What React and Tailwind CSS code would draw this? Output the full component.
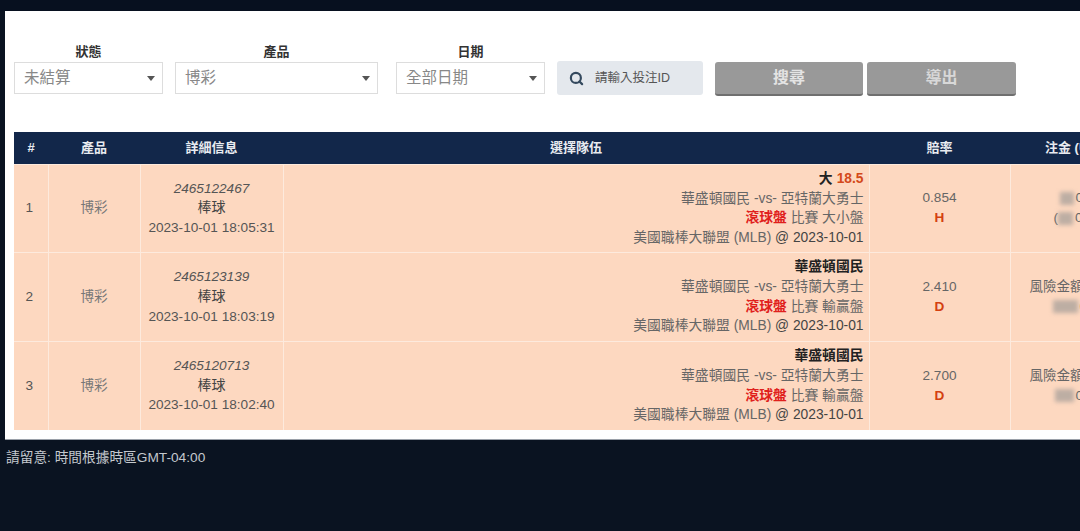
import React from 'react';
import { Search } from 'lucide-react';

const rows = [
  {
    no: 1, id: '2465122467', time: '2023-10-01 18:05:31', pick: '大', line: '18.5', market: '大小盤', odds: '0.854', code: 'H',
    stake: [
      { left: 'ml-[30px]', mask: 'w-[14px]', tail: '00' },
      { left: 'ml-[24px]', head: '(', mask: 'w-[15px]', tail: '00' },
    ],
  },
  {
    no: 2, id: '2465123139', time: '2023-10-01 18:03:19', pick: '華盛頓國民', market: '輸贏盤', odds: '2.410', code: 'D',
    stake: [
      { left: 'ml-0', head: '風險金額' },
      { left: 'ml-[23px]', mask: 'w-[25px]', tail: '00', dark: true },
    ],
  },
  {
    no: 3, id: '2465120713', time: '2023-10-01 18:02:40', pick: '華盛頓國民', market: '輸贏盤', odds: '2.700', code: 'D',
    stake: [
      { left: 'ml-0', head: '風險金額' },
      { left: 'ml-[25px]', mask: 'w-[19px]', tail: '00' },
    ],
  },
];

function Filter({ label, value, width }) {
  return (
    <div className={`flex flex-col ${width}`}>
      <label className="h-[19px] text-center text-[13px] leading-[17px] font-bold text-[#333]">{label}</label>
      <div className="flex h-[32px] items-center justify-between border border-[#ddd] bg-white pr-[7px] pl-[9px] text-[15.5px] text-[#888]">
        <span>{value}</span>
        <span className="h-0 w-0 border-x-[4.5px] border-t-[5px] border-x-transparent border-t-[#555]" />
      </div>
    </div>
  );
}

function StakeCell({ stake }) {
  return (
    <td className="overflow-hidden border-l border-[#fdeadd] pl-[19px] align-middle text-[13.5px] leading-[20px] text-[#666]">
      {stake.map((line, i) => (
        <div key={i} className={`flex items-center whitespace-nowrap ${line.left}`}>
          {line.head && <span>{line.head}</span>}
          {line.mask && <span className={`h-[13px] bg-[#bdaea3] blur-[2px] ${line.mask}`} />}
          {line.tail && <span className={`ml-[2px] ${line.dark ? 'font-bold text-[#222]' : ''}`}>{line.tail}</span>}
        </div>
      ))}
    </td>
  );
}

export default function App() {
  return (
    <div className="h-[531px] w-[1080px] overflow-hidden bg-[#0a1321] font-['Liberation_Sans','Noto_Sans_CJK_TC',sans-serif]">
      <div className="h-[11px] bg-[#07101f]" />
      <main className="ml-[5px] h-[429px] overflow-hidden border-b border-[#9aa0a8] bg-white pt-[32px] pl-[9px]">
        {/* Filters */}
        <div className="flex h-[89px] items-start">
          <Filter label="狀態" value="未結算" width="w-[149px]" />
          <div className="w-[12px]" />
          <Filter label="產品" value="博彩" width="w-[203px]" />
          <div className="w-[18px]" />
          <Filter label="日期" value="全部日期" width="w-[149px]" />
          <div className="mt-[18px] ml-[12px] flex h-[34px] w-[146px] items-center rounded-[3px] bg-[#e4e8ed] pl-[12px] text-[12.5px] text-[#555]">
            <Search size={15} strokeWidth={3.5} className="text-[#34495e]" />
            <span className="ml-[11px]">請輸入投注ID</span>
          </div>
          <button className="mt-[19px] ml-[12px] h-[34px] w-[148px] rounded-[3px] border-b-2 border-[#6f6f6f] bg-[#999] text-[16px] font-bold text-[#e4e4e4]">搜尋</button>
          <button className="mt-[19px] ml-[4px] h-[34px] w-[149px] rounded-[3px] border-b-2 border-[#6f6f6f] bg-[#999] text-[16px] font-bold text-[#d8d8d8]">導出</button>
        </div>

        {/* Bets table */}
        <table className="w-[1130px] table-fixed border-collapse">
          <colgroup>
            <col className="w-[34px]" />
            <col className="w-[92px]" />
            <col className="w-[143px]" />
            <col className="w-[586px]" />
            <col className="w-[141px]" />
            <col className="w-[134px]" />
          </colgroup>
          <thead>
            <tr className="h-[32px] bg-[#12274a] text-[13px] font-bold text-[#e8ebf0]">
              <th>#</th>
              <th>產品</th>
              <th>詳細信息</th>
              <th>選擇隊伍</th>
              <th>賠率</th>
              <th className="pl-[35px] text-left whitespace-nowrap">注金 (USD)</th>
            </tr>
          </thead>
          <tbody>
            {rows.map((row) => (
              <tr key={row.no} className="h-[88.5px] border-t border-[#fdeadd] bg-[#fdd8c0] text-[13.6px] leading-[19.7px] text-[#555]">
                <td className="pr-[3px] text-center">{row.no}</td>
                <td className="border-l border-[#fdeadd] text-center text-[#777]">博彩</td>
                <td className="border-l border-[#fdeadd] text-center">
                  <div className="italic">{row.id}</div>
                  <div className="text-[14px] text-[#444]">棒球</div>
                  <div>{row.time}</div>
                </td>
                <td className="border-l border-[#fdeadd] pr-[5px] text-right text-[13.8px]">
                  <div className="font-bold text-[#222]">
                    {row.pick}
                    {row.line && <span className="ml-[4px] text-[#d4491a]">{row.line}</span>}
                  </div>
                  <div className="text-[#666]">華盛頓國民 -vs- 亞特蘭大勇士</div>
                  <div className="text-[#666]"><span className="font-bold text-[#e0201c]">滾球盤</span> 比賽 {row.market}</div>
                  <div><span className="text-[#666]">美國職棒大聯盟 (MLB)</span> <span className="text-[#444]">@ 2023-10-01</span></div>
                </td>
                <td className="border-l border-[#fdeadd] text-center leading-[20px] text-[#666]">
                  <div>{row.odds}</div>
                  <div className="font-bold text-[#d4400f]">{row.code}</div>
                </td>
                <StakeCell stake={row.stake} />
              </tr>
            ))}
          </tbody>
        </table>
      </main>
      <p className="mt-[9px] ml-[6px] text-[13.7px] leading-[18px] text-[#c4c8ce]">請留意: 時間根據時區GMT-04:00</p>
    </div>
  );
}
